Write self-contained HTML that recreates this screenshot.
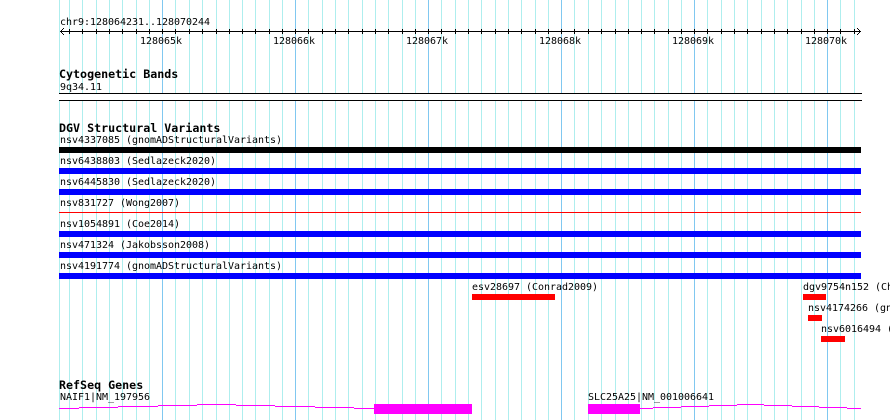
<!DOCTYPE html>
<html>
<head>
<meta charset="utf-8">
<title>Genome browser</title>
<style>
html,body{margin:0;padding:0;background:#fff;width:890px;height:420px;overflow:hidden}
svg{display:block}
text{font-family:"DejaVu Sans Mono","Liberation Mono",monospace;font-size:10px;fill:#000;letter-spacing:-0.02px;white-space:pre}
text.b{font-weight:bold;font-size:11.67px;letter-spacing:0}
</style>
</head>
<body>
<svg width="890" height="420" viewBox="0 0 890 420" xmlns="http://www.w3.org/2000/svg">
<g shape-rendering="crispEdges">
<path stroke="#aeeeee" stroke-width="1" fill="none" d="M59.5 0V420M69.5 0V420M82.5 0V420M96.5 0V420M109.5 0V420M122.5 0V420M136.5 0V420M149.5 0V420M175.5 0V420M189.5 0V420M202.5 0V420M216.5 0V420M229.5 0V420M242.5 0V420M255.5 0V420M269.5 0V420M282.5 0V420M308.5 0V420M322.5 0V420M335.5 0V420M348.5 0V420M362.5 0V420M375.5 0V420M388.5 0V420M402.5 0V420M415.5 0V420M441.5 0V420M455.5 0V420M468.5 0V420M481.5 0V420M495.5 0V420M508.5 0V420M521.5 0V420M535.5 0V420M548.5 0V420M574.5 0V420M588.5 0V420M601.5 0V420M615.5 0V420M628.5 0V420M641.5 0V420M654.5 0V420M668.5 0V420M681.5 0V420M707.5 0V420M721.5 0V420M734.5 0V420M747.5 0V420M761.5 0V420M774.5 0V420M787.5 0V420M801.5 0V420M814.5 0V420M840.5 0V420M854.5 0V420"/>
<path stroke="#80c8f0" stroke-width="1" fill="none" d="M162.5 0V420M295.5 0V420M428.5 0V420M561.5 0V420M694.5 0V420M827.5 0V420"/>

<!-- axis -->
<rect x="60" y="31" width="801" height="1" fill="#000"/>
<path stroke="#000" stroke-width="1" fill="none" d="M69.5 29V34M82.5 29V34M96.5 29V34M109.5 29V34M122.5 29V34M136.5 29V34M149.5 29V34M162.5 29V34M175.5 29V34M189.5 29V34M202.5 29V34M216.5 29V34M229.5 29V34M242.5 29V34M255.5 29V34M269.5 29V34M282.5 29V34M295.5 29V34M308.5 29V34M322.5 29V34M335.5 29V34M348.5 29V34M362.5 29V34M375.5 29V34M388.5 29V34M402.5 29V34M415.5 29V34M428.5 29V34M441.5 29V34M455.5 29V34M468.5 29V34M481.5 29V34M495.5 29V34M508.5 29V34M521.5 29V34M535.5 29V34M548.5 29V34M561.5 29V34M574.5 29V34M588.5 29V34M601.5 29V34M615.5 29V34M628.5 29V34M641.5 29V34M654.5 29V34M668.5 29V34M681.5 29V34M694.5 29V34M707.5 29V34M721.5 29V34M734.5 29V34M747.5 29V34M761.5 29V34M774.5 29V34M787.5 29V34M801.5 29V34M814.5 29V34M827.5 29V34M840.5 29V34M854.5 29V34"/>
<path fill="#000" d="M60 31h1v1h-1zM61 30h1v1h-1zM61 32h1v1h-1zM62 29h1v1h-1zM62 33h1v1h-1zM63 28h1v1h-1zM63 34h1v1h-1z"/>
<path fill="#000" d="M860 31h1v1h-1zM859 30h1v1h-1zM859 32h1v1h-1zM858 29h1v1h-1zM858 33h1v1h-1zM857 28h1v1h-1zM857 34h1v1h-1z"/>

<!-- band box -->
<rect x="59" y="93" width="803" height="8" fill="#fff"/>
<rect x="59" y="93" width="803" height="1" fill="#000"/>
<rect x="59" y="100" width="803" height="1" fill="#000"/>

<!-- DGV bars -->
<rect x="59" y="147" width="802" height="6" fill="#000"/>
<rect x="59" y="168" width="802" height="6" fill="#0000ff"/>
<rect x="59" y="189" width="802" height="6" fill="#0000ff"/>
<rect x="59" y="212" width="802" height="1" fill="#ff0000"/>
<rect x="59" y="231" width="802" height="6" fill="#0000ff"/>
<rect x="59" y="252" width="802" height="6" fill="#0000ff"/>
<rect x="59" y="273" width="802" height="6" fill="#0000ff"/>
<rect x="472" y="294" width="83" height="6" fill="#ff0000"/>
<rect x="803" y="294" width="23" height="6" fill="#ff0000"/>
<rect x="808" y="315" width="14" height="6" fill="#ff0000"/>
<rect x="821" y="336" width="24" height="6" fill="#ff0000"/>

<!-- genes -->
<rect x="374" y="404" width="98" height="10" fill="#ff00ff"/>
<rect x="588" y="404" width="52" height="10" fill="#ff00ff"/>
<path fill="#ff00ff" d="M59 408h20v1h-20zM79 407h39v1h-39zM118 406h40v1h-40zM158 405h39v1h-39zM197 404h39v1h-39zM236 405h39v1h-39zM275 406h40v1h-40zM315 407h39v1h-39zM354 408h20v1h-20z"/>
<path fill="#ff00ff" d="M640 408h13v1h-13zM653 407h28v1h-28zM681 406h28v1h-28zM709 405h28v1h-28zM737 404h27v1h-27zM764 405h28v1h-28zM792 406h27v1h-27zM819 407h28v1h-28zM847 408h14v1h-14z"/>
</g>

<text x="60" y="25">chr9:128064231..128070244</text>
<text x="140" y="44">128065k</text>
<text x="273" y="44">128066k</text>
<text x="406" y="44">128067k</text>
<text x="539" y="44">128068k</text>
<text x="672" y="44">128069k</text>
<text x="805" y="44">128070k</text>

<text class="b" x="59" y="78">Cytogenetic Bands</text>
<text x="60" y="90">9q34.11</text>

<text class="b" x="59" y="132">DGV Structural Variants</text>
<text x="60" y="143">nsv4337085 (gnomADStructuralVariants)</text>
<text x="60" y="164">nsv6438803 (Sedlazeck2020)</text>
<text x="60" y="185">nsv6445830 (Sedlazeck2020)</text>
<text x="60" y="206">nsv831727 (Wong2007)</text>
<text x="60" y="227">nsv1054891 (Coe2014)</text>
<text x="60" y="248">nsv471324 (Jakobsson2008)</text>
<text x="60" y="269">nsv4191774 (gnomADStructuralVariants)</text>
<text x="472" y="290">esv28697 (Conrad2009)</text>
<text x="803" y="290">dgv9754n152 (Ch</text>
<text x="808" y="311">nsv4174266 (gn</text>
<text x="821" y="332">nsv6016494 (</text>

<text class="b" x="59" y="389">RefSeq Genes</text>
<text x="60" y="400">NAIF1|NM_197956</text>
<text x="588" y="400">SLC25A25|NM_001006641</text>
</svg>
</body>
</html>
